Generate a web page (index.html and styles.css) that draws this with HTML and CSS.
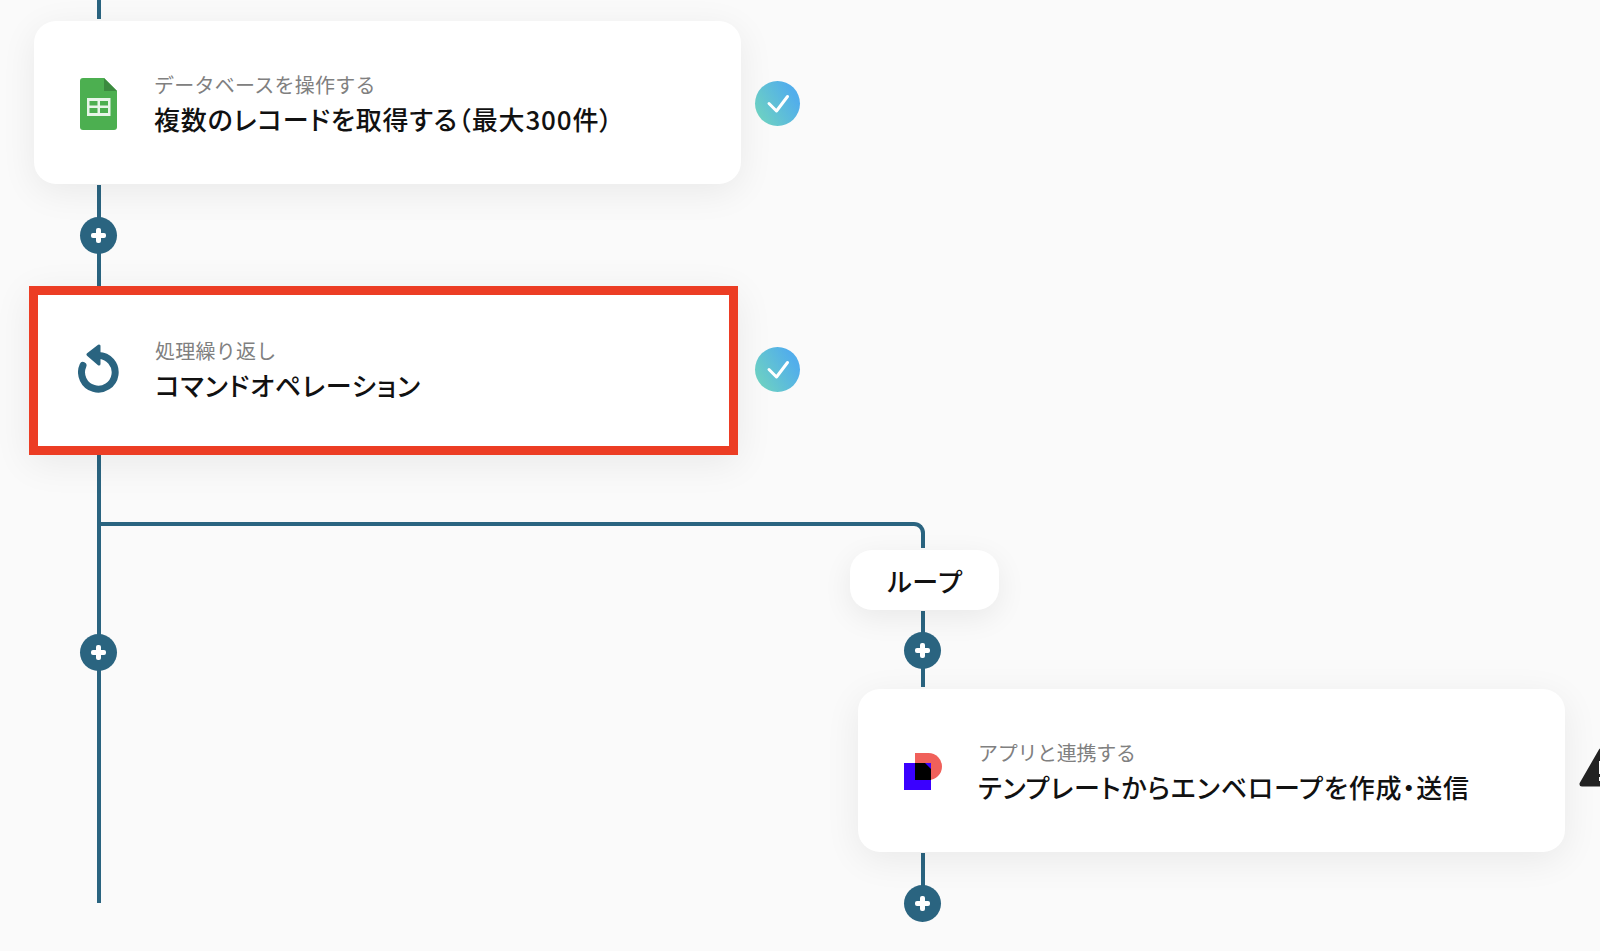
FILE: index.html
```html
<!DOCTYPE html>
<html lang="ja">

<head>
    <meta charset="UTF-8">
    <meta name="viewport" content="width=device-width, initial-scale=1.0">
    <title>フローボット</title>
    <link rel="stylesheet" href="styles.css">
</head>

<body>
<div class="canvas">
    <!-- connector lines -->
    <div class="line main-top"></div>
    <div class="line main-mid"></div>
    <div class="line main-bottom"></div>
    <div class="branch"></div>
    <div class="line loop-below"></div>
    <div class="line card-below"></div>

    <!-- spreadsheet step -->
    <div class="step step-sheet">
        <svg class="step-icon sheet-icon" viewBox="0 0 37 52">
            <path d="M3 0H24L37 13V49a3 3 0 0 1-3 3H3a3 3 0 0 1-3-3V3a3 3 0 0 1 3-3Z" fill="#4caf50"/>
            <path d="M24 0L37 13H24Z" fill="#3b8a3f"/>
            <path d="M7 20H30.500V38H7ZM9.500 23V27.500H17.500V23ZM20 23V27.500H28V23ZM9.500 30V35H17.500V30ZM20 30V35H28V30Z" fill="#e8f5e9" fill-rule="evenodd"/>
        </svg>
        <div class="step-text">
            <p class="step-label">データベースを操作する</p>
            <p class="step-title">複数のレコードを取得する（最大300件）</p>
        </div>
    </div>
    <div class="check check-sheet">
        <svg viewBox="0 0 45 45"><path d="M14 22.500L21.500 30L32.500 15.500" fill="none" stroke="#fff" stroke-width="3" stroke-linecap="round" stroke-linejoin="round"/></svg>
    </div>

    <!-- loop step, highlighted -->
    <div class="step step-loop">
        <svg class="step-icon loop-icon" viewBox="0 0 42 50">
            <path d="M20.500 11.500a16.800 16.800 0 1 1-15.500 10" fill="none" stroke="#2a6480" stroke-width="7" stroke-linecap="round"/>
            <path d="M10 10.500L21 2V20Z" fill="#2a6480" stroke="#2a6480" stroke-width="3" stroke-linejoin="round"/>
        </svg>
        <div class="step-text">
            <p class="step-label">処理繰り返し</p>
            <p class="step-title">コマンドオペレーション</p>
        </div>
    </div>
    <div class="check check-loop">
        <svg viewBox="0 0 45 45"><path d="M14 22.500L21.500 30L32.500 15.500" fill="none" stroke="#fff" stroke-width="3" stroke-linecap="round" stroke-linejoin="round"/></svg>
    </div>

    <div class="pill">ループ</div>

    <!-- app step -->
    <div class="step step-app">
        <svg class="step-icon app-icon" viewBox="0 0 38 37">
            <path d="M11 0H24.500a13.500 13.500 0 0 1 0 27H11Z" fill="#f0605a"/>
            <rect x="0" y="10" width="27" height="27" fill="#3a00ff"/>
            <path d="M11 10H21L27 16V27H11Z" fill="#000"/>
        </svg>
        <div class="step-text">
            <p class="step-label">アプリと連携する</p>
            <p class="step-title">テンプレートからエンベロープを作成・送信</p>
        </div>
    </div>

    <!-- add buttons -->
    <div class="add add-1"></div>
    <div class="add add-2"></div>
    <div class="add add-3"></div>
    <div class="add add-4"></div>

    <svg class="warn" viewBox="0 0 44 40">
        <path d="M22 3L41 36H3Z" fill="#222" stroke="#222" stroke-width="5" stroke-linejoin="round"/>
        <rect x="20" y="13" width="4" height="13" fill="#fff"/>
        <rect x="20" y="29" width="4" height="4" fill="#fff"/>
    </svg>
</div>
</body>

</html>
```

FILE: styles.css
```css
/* canvas of the flow diagram */
html, body {
    margin: 0;
    padding: 0;
    height: 100%;
    overflow: hidden;
}

body {
    background-color: #fafafa;
    font-family: "Noto Sans CJK JP", "Noto Sans", sans-serif;
    color: #111;
}

.canvas {
    position: relative;
    width: 1600px;
    height: 951px;
    overflow: hidden;
}

/* lines */
.line {
    position: absolute;
    width: 4px;
    background-color: #2a6480;
}

.main-top {
    left: 97px;
    top: 0;
    height: 19px;
}

.main-mid {
    left: 97px;
    top: 185px;
    height: 101px;
}

.main-bottom {
    left: 97px;
    top: 454px;
    height: 449px;
}

.loop-below {
    left: 921px;
    top: 611px;
    height: 76px;
}

.card-below {
    left: 921px;
    top: 853px;
    height: 40px;
}

.branch {
    position: absolute;
    left: 98px;
    top: 522px;
    width: 827px;
    height: 26px;
    border-top: 4px solid #2a6480;
    border-right: 4px solid #2a6480;
    border-top-right-radius: 11px;
    box-sizing: border-box;
}

/* step cards */
.step {
    position: absolute;
    display: flex;
    align-items: center;
    box-sizing: border-box;
    background-color: #fff;
    border-radius: 22px;
    box-shadow: 0 8px 36px rgba(0, 0, 0, 0.07);
}

.step-sheet {
    left: 34px;
    top: 21px;
    width: 707px;
    height: 163px;
    padding-left: 46px;
}

.step-loop {
    left: 29px;
    top: 286px;
    width: 709px;
    height: 169px;
    padding-left: 40px;
    border: 9px solid #ec3d24;
    border-radius: 0;
}

.step-app {
    left: 858px;
    top: 689px;
    width: 707px;
    height: 163px;
    padding-left: 46px;
}

.step-icon {
    display: block;
    flex-shrink: 0;
}

.sheet-icon {
    width: 37px;
    height: 52px;
    margin-top: 2px;
    margin-right: 37px;
}

.loop-icon {
    width: 42px;
    height: 50px;
    margin-bottom: 3px;
    margin-right: 35px;
}

.app-icon {
    width: 38px;
    height: 37px;
    margin-top: 2px;
    margin-right: 36px;
}

.step-text {
    display: flex;
    flex-direction: column;
    gap: 1px;
    padding-top: 2px;
}

.step-loop .step-text {
    padding-top: 0;
    padding-bottom: 2px;
}

.step-label {
    margin: 0;
    font-size: 20px;
    line-height: 30px;
    color: #808080;
    letter-spacing: 0.25px;
}

.step-app .step-label {
    letter-spacing: -0.3px;
}

.step-title {
    margin: 0;
    font-size: 26px;
    line-height: 36px;
    font-weight: 500;
    color: #111;
    font-feature-settings: "palt";
    letter-spacing: 0.85px;
}

/* pill */
.pill {
    position: absolute;
    left: 850px;
    top: 550px;
    width: 149px;
    height: 60px;
    display: flex;
    align-items: center;
    justify-content: center;
    background-color: #fff;
    border-radius: 22px;
    box-shadow: 0 8px 30px rgba(0, 0, 0, 0.07);
    font-size: 26px;
    font-weight: 500;
}

/* check badge */
.check {
    position: absolute;
    left: 755px;
    width: 45px;
    height: 45px;
    border-radius: 50%;
    background: linear-gradient(60deg, #72d7bb, #52aeeb 80%);
}

.check svg {
    display: block;
}

.check-sheet {
    top: 81px;
}

.check-loop {
    top: 347px;
}

/* add button */
.add {
    position: absolute;
    width: 37px;
    height: 37px;
    border-radius: 50%;
    background-color: #2a6480;
}

.add::before,
.add::after {
    content: "";
    position: absolute;
    background-color: #fff;
    border-radius: 2px;
}

.add::before {
    left: 11px;
    top: 16px;
    width: 15px;
    height: 5px;
}

.add::after {
    left: 16px;
    top: 11px;
    width: 5px;
    height: 15px;
}

.add-1 {
    left: 80px;
    top: 217px;
}

.add-2 {
    left: 80px;
    top: 634px;
}

.add-3 {
    left: 904px;
    top: 632px;
}

.add-4 {
    left: 904px;
    top: 885px;
}

/* warning mark, cut off by the window */
.warn {
    position: absolute;
    left: 1579px;
    top: 748px;
    width: 44px;
    height: 40px;
}
```
